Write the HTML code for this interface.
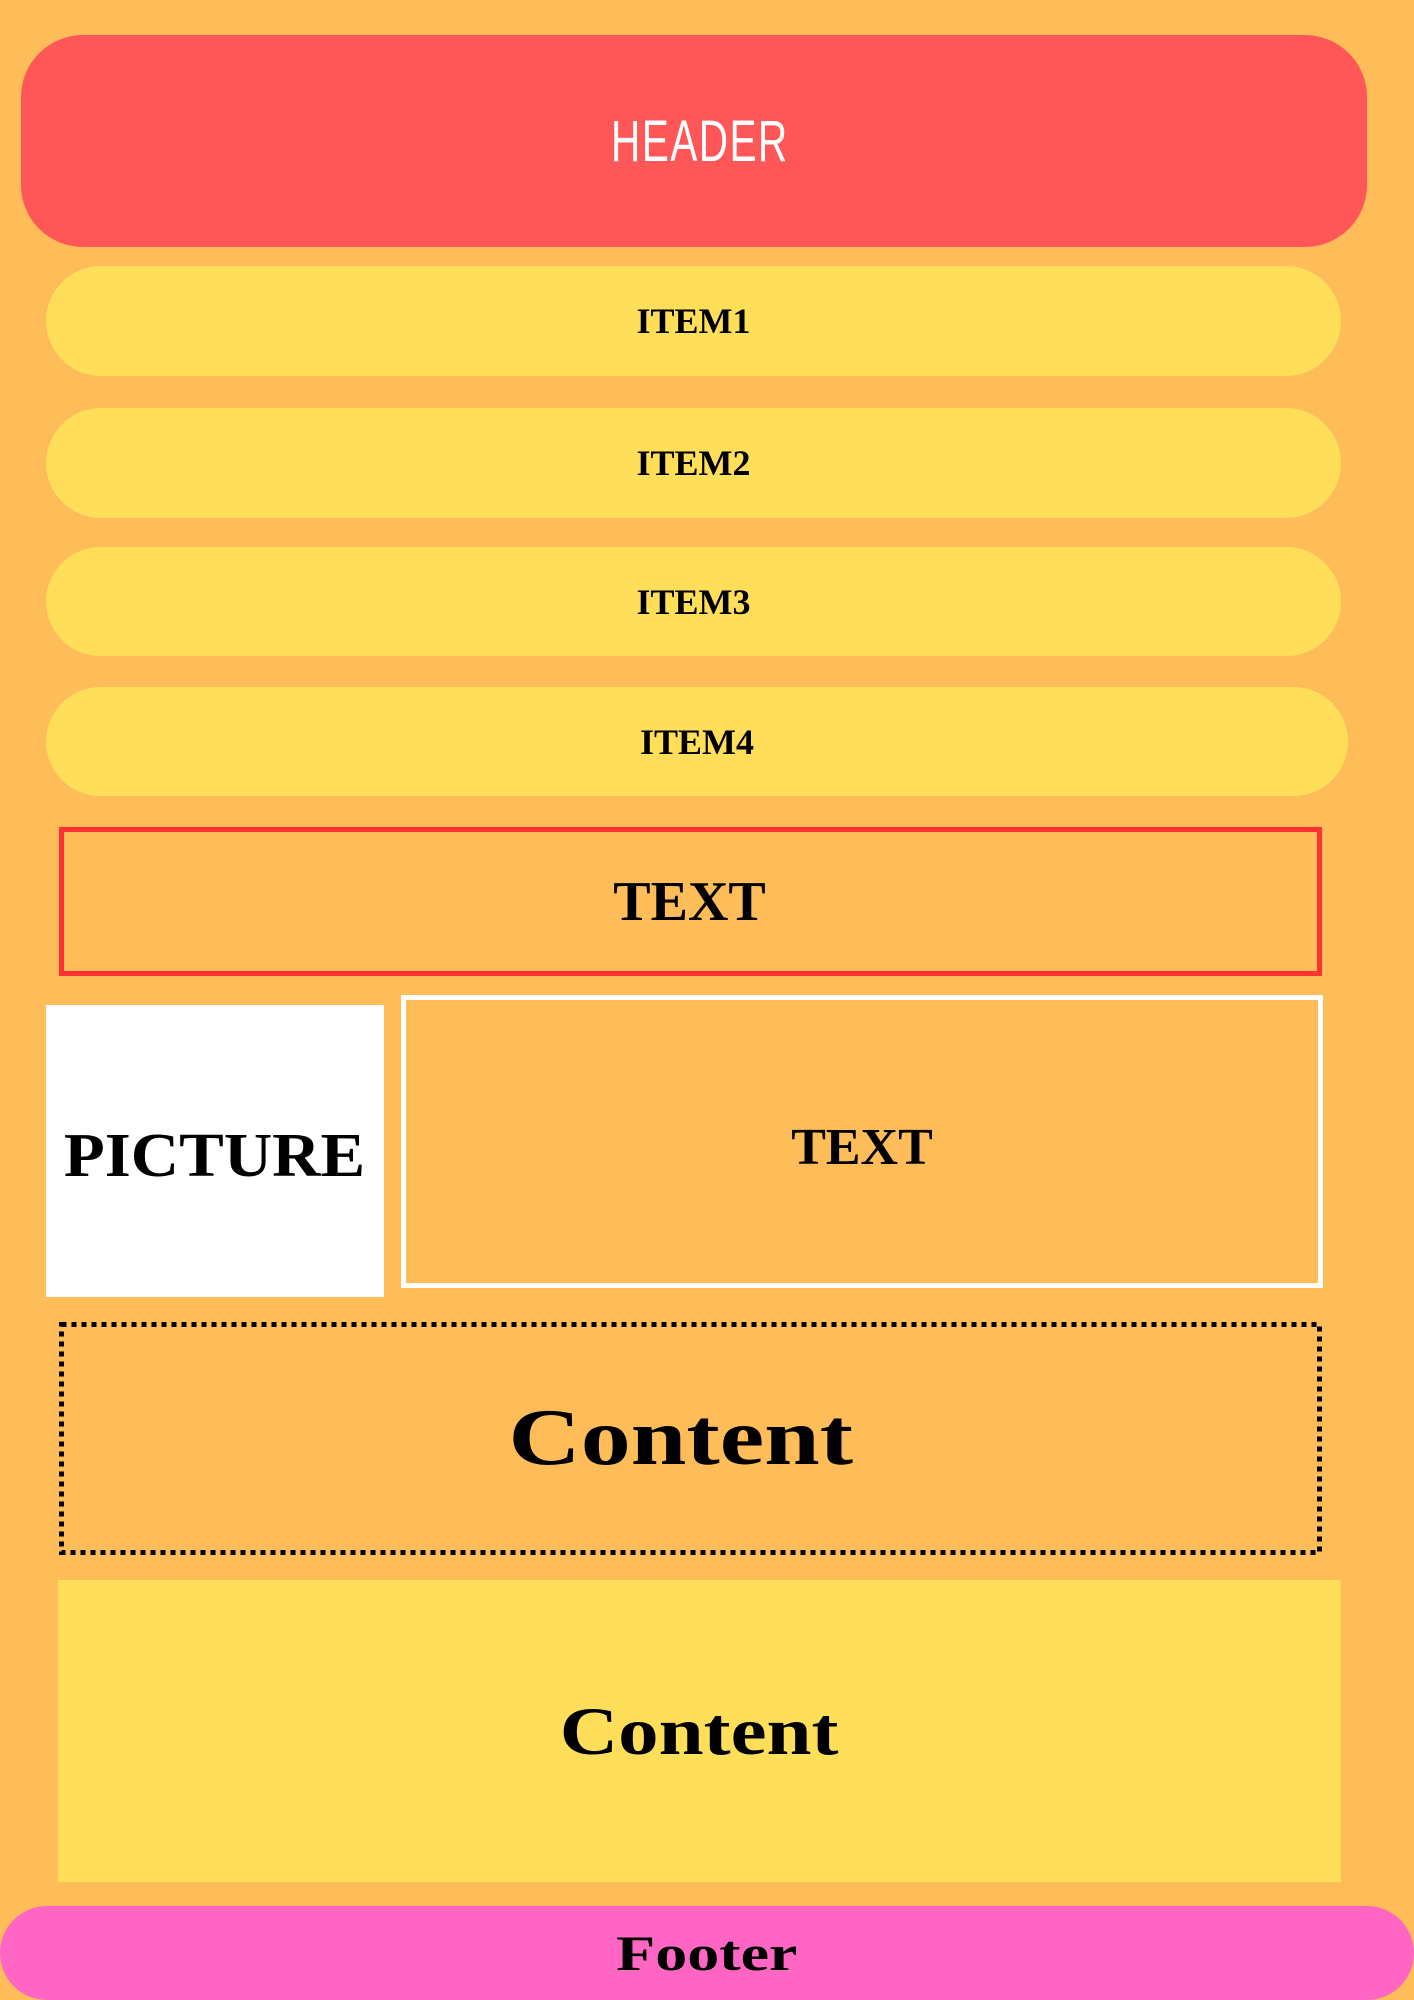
<!DOCTYPE html>
<html><head><meta charset="utf-8"><style>
html,body{margin:0;padding:0}
body{width:1414px;height:2000px;background:#FEBD59;position:relative;overflow:hidden;font-family:"Liberation Serif",serif;font-weight:bold;color:#000}
.b{position:absolute;box-sizing:border-box;display:flex;align-items:center;justify-content:center}
.hd{left:21px;top:35px;width:1346px;height:212px;background:#FF5757;border-radius:62px;color:#fff;font-family:"Liberation Sans Narrow","Liberation Sans",sans-serif;font-weight:normal;font-size:58px;letter-spacing:2px}
.it{left:46px;width:1295px;height:110px;background:#FFDE59;border-radius:55px;font-size:36px}
.it span{display:inline-block;transform:scaleX(1.0)}
</style></head><body>
<div class="b hd"><span style="display:inline-block;transform:scaleX(0.7);margin-left:12px">HEADER</span></div>
<div class="b it" style="top:266px"><span>ITEM1</span></div>
<div class="b it" style="top:408px"><span>ITEM2</span></div>
<div class="b it" style="top:547px;height:109px"><span>ITEM3</span></div>
<div class="b it" style="top:687px;width:1302px;height:109px"><span style="margin-left:0px">ITEM4</span></div>
<div class="b" style="left:59px;top:827px;width:1263px;height:149px;border:5px solid #FF3131;font-size:56px"><span style="margin-left:-2px">TEXT</span></div>
<div class="b" style="left:46px;top:1005px;width:338px;height:292px;background:#fff;font-size:62px;align-items:flex-start;padding-top:116px"><span style="display:inline-block;transform:scaleX(1.08)">PICTURE</span></div>
<div class="b" style="left:401px;top:995px;width:922px;height:293px;border:5px solid #fff;font-size:52px;align-items:flex-start;padding-top:118px"><span>TEXT</span></div>
<svg style="position:absolute;left:59px;top:1322px" width="1263" height="233"><rect x="2.5" y="2.5" width="1258" height="228" fill="none" stroke="#000" stroke-width="5" stroke-dasharray="5 5"/></svg>
<div class="b" style="left:59px;top:1322px;width:1263px;height:233px;font-size:80px"><span style="margin-left:-20px;display:inline-block;transform:scaleX(1.25)">Content</span></div>
<div class="b" style="left:58px;top:1580px;width:1283px;height:302px;background:#FFDE59;font-size:68px"><span style="display:inline-block;transform:scaleX(1.19)">Content</span></div>
<div class="b" style="left:0;top:1906px;width:1414px;height:94px;background:#FF66C4;border-radius:47px;font-size:50px"><span style="display:inline-block;transform:scaleX(1.28)">Footer</span></div>
</body></html>
